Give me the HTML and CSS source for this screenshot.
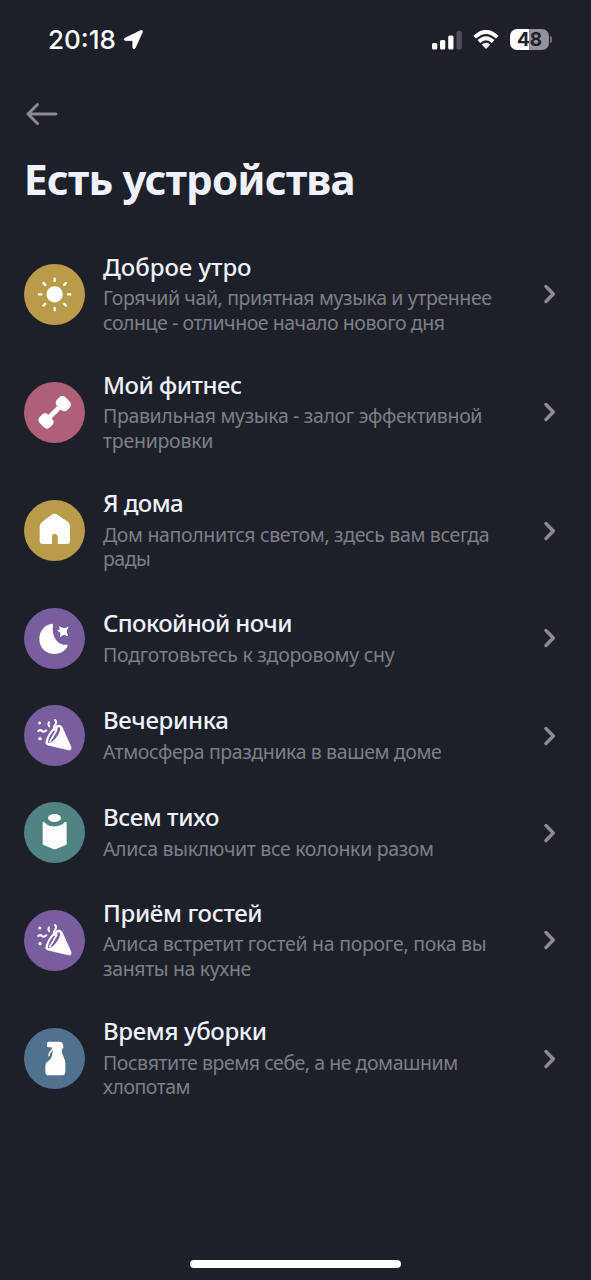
FILE: index.html
```html
<!DOCTYPE html>
<html lang="ru">
<head>
<meta charset="utf-8">
<title>Есть устройства</title>
<link rel="stylesheet" href="styles.css">
</head>
<body>
<svg class="defs" width="0" height="0">
  <symbol id="chevron" viewBox="0 0 12 20"><path d="M2 2.5 9.3 10 2 17.5" fill="none" stroke="currentColor" stroke-width="3.4" stroke-linecap="round" stroke-linejoin="round"/></symbol>
  <symbol id="party" viewBox="30 30 183 183">
    <path d="M128 91Q138 86 145 95L172 156Q174 167 163 166L100 151Q91 147 96 134Q106 106 128 91Z" fill="#fff"/>
    <path d="M102 145Q101 130 114 113Q126 97 137 97Q141 103 132 120Q118 143 102 145Z" fill="#775e9e"/>
    <path d="M106 142Q115 128 123 114Q131 105 126 95" fill="none" stroke="#fff" stroke-width="5"/>
    <path d="M105 82Q101 88 106 94M123 75Q129 81 124 88Q117 96 123 106M73 108Q79 103 84 108T97 106" fill="none" stroke="#fff" stroke-width="6" stroke-linecap="round"/>
    <circle cx="77" cy="84" r="4.5" fill="#fff"/><circle cx="78" cy="131" r="5" fill="#fff"/>
  </symbol>
</svg>
<div class="screen">
  <header class="status">
    <div class="clock"><span class="time">20:18</span>
      <svg class="locate" width="21" height="22" viewBox="0 0 22 22"><path d="M2 9.2 18.3 1.2Q21 .3 20.2 3L12.7 19.5Q10.8 21.4 10.3 18.8V11.6H3Q-.2 10.9 2 9.2Z" fill="#fff" stroke="#fff" stroke-width=".8"/></svg>
    </div>
    <div class="indicators">
      <svg width="30" height="20" viewBox="0 0 30 20"><rect x="0" y="13" width="5.300" height="6.500" rx="1.500" fill="#fff"/><rect x="8" y="10" width="5.300" height="9.500" rx="1.500" fill="#fff"/><rect x="16.200" y="5.500" width="5.300" height="14" rx="1.500" fill="#fff"/><rect x="24.500" y="1" width="5.300" height="18.500" rx="1.500" fill="#4e4f57"/></svg>
      <svg class="wifi" width="26" height="20" viewBox="0 0 26 20"><g fill="none" stroke="#fff" stroke-width="3.800"><path d="M1.700 7.200Q13-3.400 24.300 7.200"/><path d="M5.900 11.500Q13 4.800 20.100 11.500"/></g><path d="M8.800 14.600Q13 11 17.200 14.600L13 19Z" fill="#fff"/></svg>
      <div class="battery"><span class="level">48</span></div>
      <i class="battery-cap"></i>
    </div>
  </header>
  <nav class="nav"><svg width="32" height="24" viewBox="0 0 32 24"><path d="M11.500 2.500 2 12l9.500 9.500M2 12h28" fill="none" stroke="#8b8c93" stroke-width="2.900" stroke-linecap="round" stroke-linejoin="round"/></svg></nav>
  <h1 class="heading">Есть устройства</h1>
  <main class="list">
    <section class="row">
      <svg class="icon gold" viewBox="30 41 183 183"><circle cx="122" cy="132" r="24.500" fill="#fff"/><path d="M122 85v7M122 173v7M75 132h7M162 132h7M88.500 98.500l5 5M150.500 160.500l5 5M88.500 165.500l5-5M150.500 103.500l5-5" stroke="#fff" stroke-width="7" stroke-linecap="round"/></svg>
      <div class="copy"><h2 class="t1">Доброе утро</h2><p><span class="a1">Горячий чай, приятная музыка и утреннее</span><br><span class="a2">солнце - отличное начало нового дня</span></p></div>
      <svg class="chevron"><use href="#chevron"/></svg>
    </section>
    <section class="row">
      <svg class="icon rose" viewBox="30 36 183 183"><path d="M103 145 141 107" stroke="#fff" stroke-width="15"/><g fill="#fff"><rect x="-22" y="-18" width="44" height="36" rx="13" transform="translate(148 101) rotate(45)"/><rect x="-22" y="-18" width="44" height="36" rx="13" transform="translate(96 153) rotate(45)"/></g></svg>
      <div class="copy"><h2 class="t2">Мой фитнес</h2><p><span class="b1">Правильная музыка - залог эффективной</span><br><span class="b2">тренировки</span></p></div>
      <svg class="chevron"><use href="#chevron"/></svg>
    </section>
    <section class="row">
      <svg class="icon gold" viewBox="30 30 183 183"><path d="M112 75Q122 68 132 75L162 96Q168 101 168 109V153Q168 162 159 162H131V141Q131 132 122 132Q114 132 114 141V162H86Q77 162 77 153V109Q77 101 84 96Z" fill="#fff"/></svg>
      <div class="copy"><h2 class="t3">Я дома</h2><p><span class="c1">Дом наполнится светом, здесь вам всегда</span><br><span class="c2">рады</span></p></div>
      <svg class="chevron"><use href="#chevron"/></svg>
    </section>
    <section class="row single">
      <svg class="icon violet" viewBox="30 24 183 183"><path d="M113 71Q118 70 117 77C112 105 130 137 156 134Q163 132 161 139C153 154 139 162 121 162C94 162 76 142 76 117C76 93 91 75 113 71Z" fill="#fff"/><path d="M135 78Q145 85 151 84Q157 84 162 80Q164 80 163 83Q156 91 158 97Q160 102 162 106Q162 109 159 108Q151 103 146 106L139 111Q137 111 138 108Q141 100 138 97L130 92Q129 90 132 90Q138 90 137 86Z" fill="#fff"/></svg>
      <div class="copy"><h2 class="t4">Спокойной ночи</h2><p><span class="d1">Подготовьтесь к здоровому сну</span></p></div>
      <svg class="chevron"><use href="#chevron"/></svg>
    </section>
    <section class="row single">
      <svg class="icon violet"><use href="#party"/></svg>
      <div class="copy"><h2 class="t5">Вечеринка</h2><p><span class="e1">Атмосфера праздника в вашем доме</span></p></div>
      <svg class="chevron"><use href="#chevron"/></svg>
    </section>
    <section class="row single">
      <svg class="icon teal" viewBox="30 21 183 183"><ellipse cx="121.500" cy="69" rx="19.500" ry="12" fill="#fff"/><path d="M86 84Q86 80 91 82Q99 91 109 93Q122 96 135 92Q147 89 153 81Q158 80 158 84V146Q158 149 154 151L128 161Q122 164 116 161L89 150Q86 149 86 146Z" fill="#fff"/></svg>
      <div class="copy"><h2 class="t6">Всем тихо</h2><p><span class="f1">Алиса выключит все колонки разом</span></p></div>
      <svg class="chevron"><use href="#chevron"/></svg>
    </section>
    <section class="row">
      <svg class="icon violet"><use href="#party"/></svg>
      <div class="copy"><h2 class="t7">Приём гостей</h2><p><span class="g1">Алиса встретит гостей на пороге, пока вы</span><br><span class="g2">заняты на кухне</span></p></div>
      <svg class="chevron"><use href="#chevron"/></svg>
    </section>
    <section class="row">
      <svg class="icon blue" viewBox="30 39 183 183"><path d="M103 80H136Q146 80 147 89L148 94Q150 100 144 103Q142 115 149 127Q154 135 154 145V170Q154 181 143 181H104Q94 181 94 170V153Q94 143 102 139Q112 132 114 122L117 103L115 98Q111 96 108 97H103Q99 97 99 93V85Q99 80 103 80Z" fill="#fff"/><path d="M116 98Q116 105 110 110Q105 114 105 122" fill="none" stroke="#fff" stroke-width="4.500" stroke-linecap="round"/></svg>
      <div class="copy"><h2 class="t8">Время уборки</h2><p><span class="i1">Посвятите время себе, а не домашним</span><br><span class="i2">хлопотам</span></p></div>
      <svg class="chevron"><use href="#chevron"/></svg>
    </section>
  </main>
  <footer class="home"><i class="home-bar"></i></footer>
</div>
</body>
</html>
```
FILE: styles.css
```css
* { box-sizing: border-box; }
body { margin: 0; background: #1e2029; }
.defs { display: block; }
.screen { width: 591px; height: 1280px; display: flex; flex-direction: column; font-family: "Noto Sans", sans-serif; color: #f0f3ff; overflow: hidden; }
.status { height: 78px; padding: 1px 39px 0 48px; display: flex; align-items: center; justify-content: space-between; font-family: Inter, sans-serif; color: #fff; }
.clock { display: flex; align-items: center; gap: 7px; }
.time { font-size: 26px; font-weight: 500; line-height: 32px; padding-top: 1px; }
.indicators { display: flex; align-items: center; }
.wifi { margin: 0 11px; }
.battery { width: 39px; height: 21px; border-radius: 7px; background: linear-gradient(90deg, #fff 48%, #92939a 48%); display: flex; align-items: center; justify-content: center; }
.level { font-size: 19px; font-weight: 700; color: #1e2029; line-height: 22px; }
.battery-cap { width: 2px; height: 7px; margin-left: 1px; border-radius: 0 2px 2px 0; background: #6f7078; }
.nav { height: 71px; padding: 24px 0 0 26px; }
.nav svg { display: block; }
.heading { margin: 0; height: 86px; padding-left: 24px; font-size: 42px; line-height: 59px; font-weight: 700; letter-spacing: -.8px; white-space: nowrap; }
.list { display: flex; flex-direction: column; }
.row { height: 118.25px; padding: 0 35px 0 24px; display: flex; align-items: center; }
.single { height: 97.2px; }
.icon { width: 61px; height: 61px; border-radius: 50%; flex: none; }
.gold { background: #b99b49; }
.rose { background: #ad6078; }
.violet { background: #775e9e; }
.teal { background: #518383; }
.blue { background: #50718f; }
.copy { flex: 1; margin-left: 18px; white-space: nowrap; }
.copy h2 { margin: -2.5px 0 3.5px; font-size: 24px; line-height: 32px; font-weight: 500; }
.copy p { margin: 0; font-size: 19.5px; line-height: 24.5px; color: #7d7f86; }
.chevron { width: 12px; height: 20px; flex: none; color: #8b8c93; }

/* Optical tracking per line */
.t1 { letter-spacing: -.05px; }
.t2 { letter-spacing: -.5px; }
.t3 { letter-spacing: -.6px; }
.t4 { letter-spacing: -.6px; }
.t5 { letter-spacing: -.33px; }
.t6 { letter-spacing: -.4px; }
.t7 { letter-spacing: -.35px; }
.t8 { letter-spacing: -.37px; }
.a1 { letter-spacing: -.385px; }
.a2 { letter-spacing: -.45px; }
.b1 { letter-spacing: -.35px; }
.b2 { letter-spacing: -.25px; }
.c1 { letter-spacing: -.35px; }
.c2 { letter-spacing: -.5px; }
.d1 { letter-spacing: -.26px; }
.e1 { letter-spacing: -.39px; }
.f1 { letter-spacing: -.33px; }
.g1 { letter-spacing: -.28px; }
.g2 { letter-spacing: -.36px; }
.i1 { letter-spacing: -.46px; }
.i2 { letter-spacing: -.5px; }

.home { margin-top: auto; height: 20px; display: flex; justify-content: center; }
.home-bar { width: 211px; height: 8px; border-radius: 4px; background: #fff; }
```
